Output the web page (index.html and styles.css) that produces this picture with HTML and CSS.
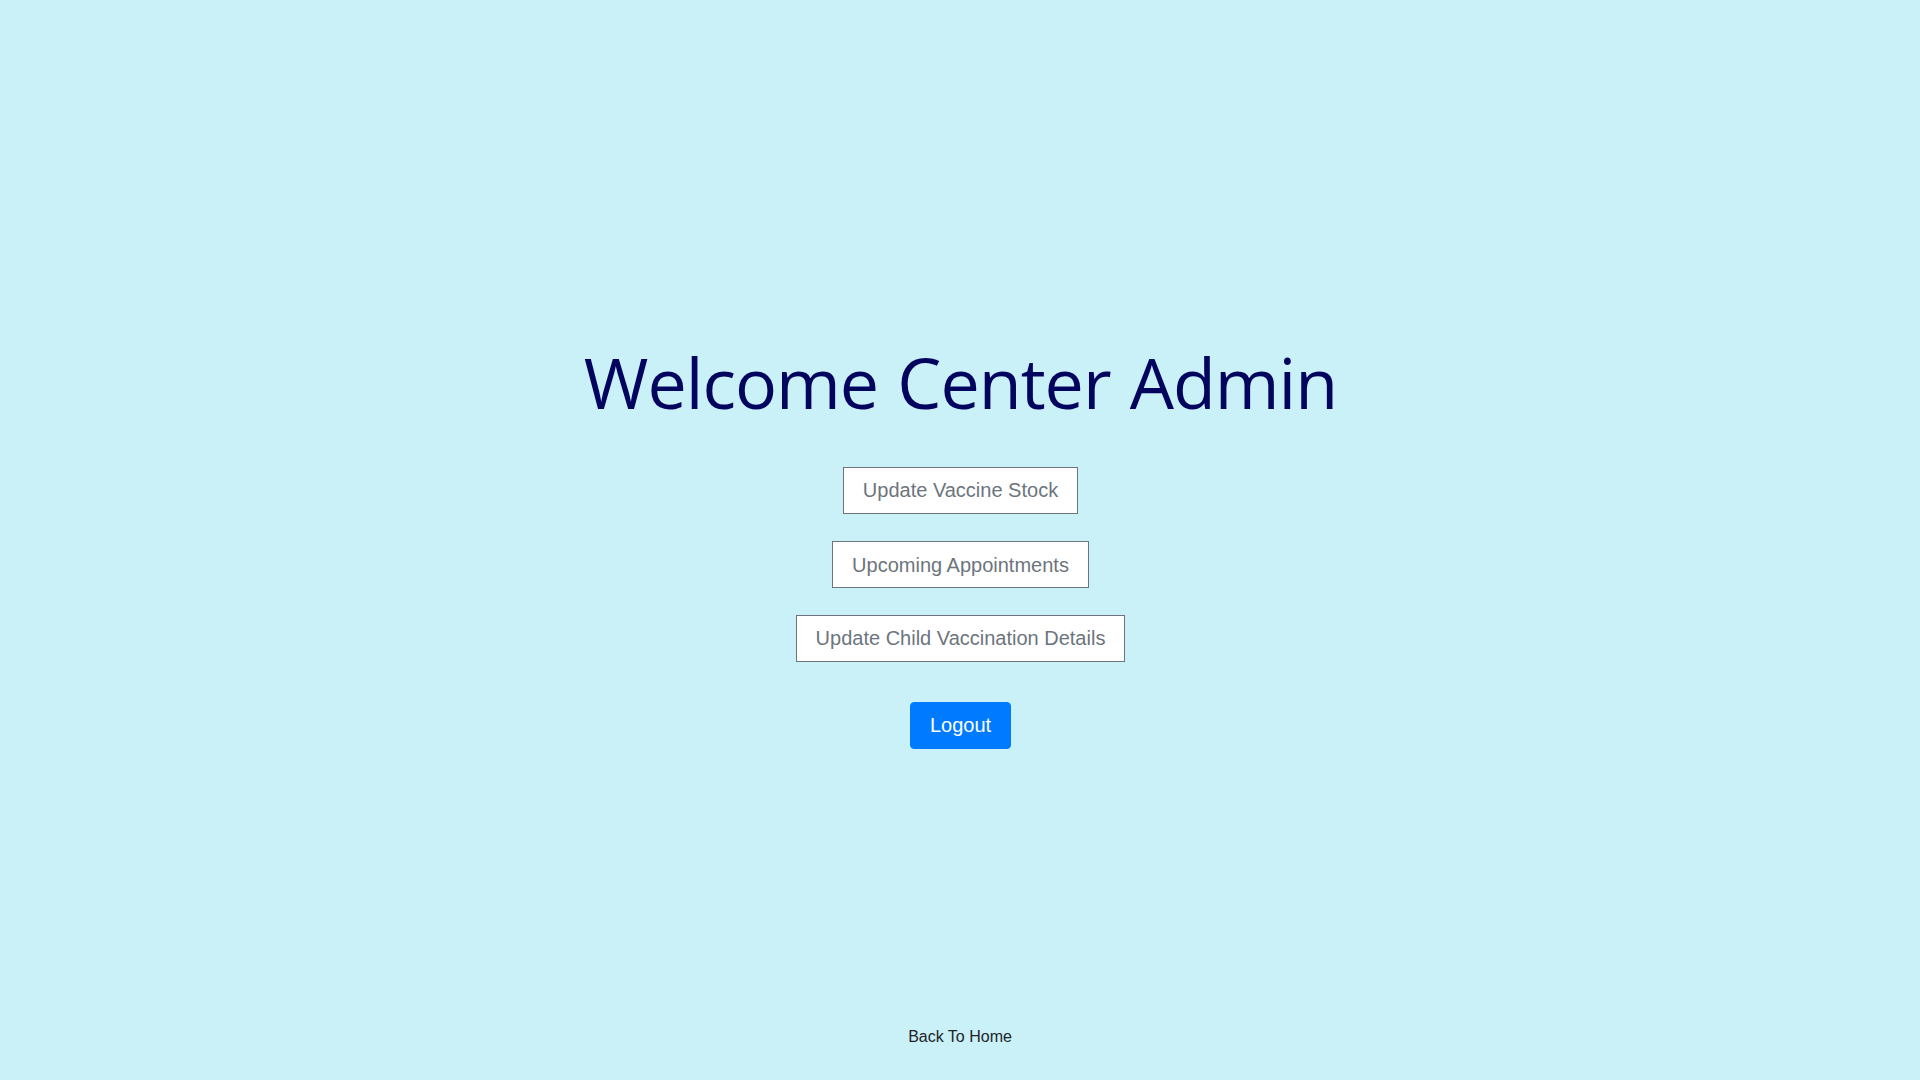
FILE: index.html
```
<!DOCTYPE html>
<html lang="en">
<head>
<meta charset="utf-8">
<title>Center Admin</title>
<link rel="stylesheet" href="styles.css">
</head>
<body>
<main class="panel">
<h1 class="title">Welcome Center Admin</h1>
<button class="btn">Update Vaccine Stock</button>
<button class="btn middle">Upcoming Appointments</button>
<button class="btn">Update Child Vaccination Details</button>
<button class="btn primary">Logout</button>
</main>
<footer class="footer"><a class="home">Back To Home</a></footer>
</body>
</html>
```
FILE: styles.css
```
* { box-sizing: border-box; }
body {
  margin: 0;
  height: 100vh;
  display: flex;
  flex-direction: column;
  justify-content: space-between;
  background: #caf0f8;
  font-family: "Liberation Sans", Arial, sans-serif;
}
.panel {
  display: flex;
  flex-direction: column;
  align-items: center;
  padding: 338px 0 0 1px;
}
.title {
  margin: 0 0 41px;
  font: 400 70px/88px "Open Sans", "Noto Sans", sans-serif;
  letter-spacing: -1px;
  word-spacing: 2px;
  color: #03045e;
  white-space: nowrap;
}
.btn {
  height: 47px;
  margin-bottom: 27px;
  padding: 0 19px 2px;
  border: 1px solid #6c757d;
  background: #fff;
  color: #6c757d;
  font: 400 20px/30px "Liberation Sans", Arial, sans-serif;
}
.middle {
  padding-bottom: 0;
}
.primary {
  margin: 13px 0 0;
  border-color: #007bff;
  border-radius: 4px;
  background: #007bff;
  color: #fff;
}
.footer {
  padding-bottom: 31px;
  text-align: center;
}
.home {
  font-size: 16px;
  line-height: 24px;
  color: #212529;
}
```
